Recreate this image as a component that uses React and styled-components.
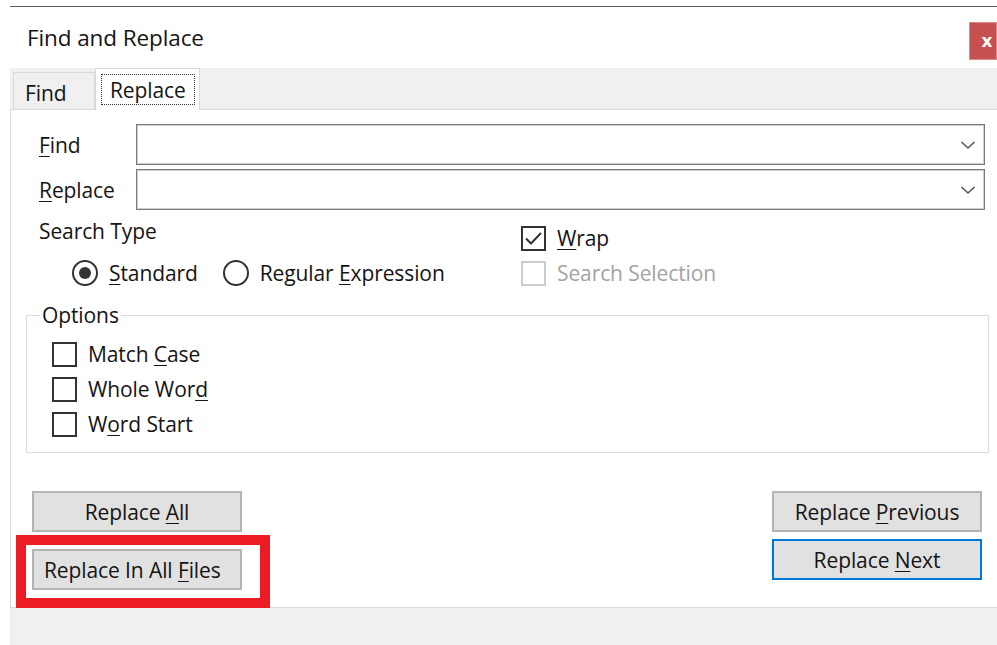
import React from 'react'
import styled, { createGlobalStyle } from 'styled-components'

const GlobalStyle = createGlobalStyle`
    html, body {
        margin: 0;
        padding: 0;
        background: #fff;
        overflow: hidden;
    }
    body {
        font-family: "Open Sans", "Noto Sans", "Liberation Sans", sans-serif;
        color: #141414;
    }
`

const Window = styled.div`
    width: 995px;
    margin: 6px 0 0 10px;
    border-top: 1px solid #5c5c5c;
    display: flex;
    flex-direction: column;
    font-size: 21px;
    letter-spacing: -0.1px;
`

const TitleBar = styled.div`
    height: 61px;
    display: flex;
    align-items: flex-start;
    justify-content: space-between;
    background: #fff;
`

const Title = styled.div`
    padding: 16px 0 0 17px;
    line-height: 30px;
    font-size: 22.5px;
`

const CloseButton = styled.div`
    margin: 15px 8px 0 0;
    width: 28px;
    height: 38px;
    background: #c75050;
    border: 1px solid #d98a8a;
    box-sizing: border-box;
    color: #fff;
    font-family: "DejaVu Sans", sans-serif;
    font-weight: bold;
    font-size: 17px;
    display: flex;
    align-items: center;
    justify-content: center;
    padding-left: 8px;
`

const TabStrip = styled.div`
    height: 41px;
    background: #f0f0f0;
    border-bottom: 1px solid #d9d9d9;
    display: flex;
    align-items: flex-end;
    padding-left: 3px;
`

const Tab = styled.div`
    box-sizing: border-box;
    height: ${p => (p.$active ? '42px' : '37px')};
    margin-bottom: ${p => (p.$active ? '-1px' : '0')};
    padding: ${p => (p.$active ? '5px 4px 0 5px' : '5px 0 0 11px')};
    width: ${p => (p.$active ? '105px' : '82px')};
    background: ${p => (p.$active ? '#fff' : '#f0f0f0')};
    border: 1px solid #d9d9d9;
    border-bottom: none;
    line-height: 30px;
`

const FocusRing = styled.div`
    border: 1px dotted #333;
    height: 31px;
    box-sizing: border-box;
    display: flex;
    align-items: center;
    padding-left: 8px;
    line-height: 26px;
`

const Panel = styled.div`
    background: #fff;
    border-left: 1px solid #dadada;
    padding: 14px 16px 17px 15px;
    display: flex;
    flex-direction: column;
`

const FieldRow = styled.div`
    display: grid;
    grid-template-columns: 97px 1fr;
    align-items: center;
    margin: 0 4px 0 13px;
    & + & {
        margin-top: 4px;
    }
`

const Label = styled.label`
    line-height: 28px;
`

const Combo = styled.div`
    height: 41px;
    box-sizing: border-box;
    border: 1px solid #7a7a7a;
    box-shadow: inset 0 0 0 1px #cfcfcf;
    display: flex;
    align-items: center;
    justify-content: flex-end;
    padding-right: 8px;
`

const Key = styled.span`
    text-decoration: underline;
    text-underline-offset: 3px;
    text-decoration-thickness: 1px;
`

const SearchArea = styled.div`
    display: flex;
    padding-left: 13px;
`

const SearchTypeColumn = styled.div`
    width: 482px;
    display: flex;
    flex-direction: column;
`

const SectionLabel = styled.div`
    margin-top: 8px;
    line-height: 26px;
`

const RadioRow = styled.div`
    display: flex;
    align-items: center;
    gap: 25px;
    margin: 16px 0 0 33px;
`

const Choice = styled.div`
    display: flex;
    align-items: center;
    gap: 11px;
    height: 26px;
    line-height: 26px;
    color: ${p => (p.$disabled ? '#a3a3a3' : 'inherit')};
`

const RadioDot = styled.span`
    width: 26px;
    height: 26px;
    box-sizing: border-box;
    border-radius: 50%;
    border: 2px solid #333;
    display: flex;
    align-items: center;
    justify-content: center;
    &::after {
        content: '';
        width: 12px;
        height: 12px;
        border-radius: 50%;
        background: ${p => (p.$checked ? '#333' : 'transparent')};
    }
`

const Box = styled.span`
    width: 25px;
    height: 25px;
    box-sizing: border-box;
    border: 2px solid ${p => (p.$disabled ? '#cccccc' : '#333')};
    display: flex;
    align-items: center;
    justify-content: center;
    flex-shrink: 0;
`

const FlagsColumn = styled.div`
    display: flex;
    flex-direction: column;
    gap: 9px;
    margin-top: 15px;
`

const OptionsGroup = styled.fieldset`
    margin: 17px 0 0;
    padding: 14px 0 15px 25px;
    border: 1px solid #dcdcdc;
    display: flex;
    flex-direction: column;
    gap: 9px;
    min-width: 0;
    legend {
        margin-left: -12px;
        padding: 0 2px;
        line-height: 24px;
    }
`

const ButtonArea = styled.div`
    display: flex;
    justify-content: space-between;
    margin: 38px 7px 0 6px;
`

const ButtonColumn = styled.div`
    display: flex;
    flex-direction: column;
    gap: ${p => p.$gap}px;
`

const Button = styled.button`
    width: 210px;
    height: 41px;
    box-sizing: border-box;
    background: #e1e1e1;
    border: ${p => (p.$default ? '2px solid #0078d7' : '2px solid #b4b4b4')};
    font: inherit;
    color: inherit;
    letter-spacing: inherit;
    padding: ${p => (p.$left ? '0 0 0 10px' : '0')};
    text-align: ${p => (p.$left ? 'left' : 'center')};
    line-height: 28px;
    white-space: nowrap;
`

const Highlighted = styled.div`
    position: relative;
`

const RedMark = styled.div`
    position: absolute;
    left: -16px;
    top: -14px;
    width: 254px;
    height: 73px;
    box-sizing: border-box;
    border: 10px solid #ec1c24;
    pointer-events: none;
    z-index: 2;
`

const StatusBar = styled.div`
    height: 38px;
    background: #f0f0f0;
    border-top: 1px solid #dadada;
`

const Chevron = () => (
    <svg width="16" height="10" viewBox="0 0 16 10">
        <path d="M1.5 2 L8 8 L14.5 2" fill="none" stroke="#555" strokeWidth="1.6" />
    </svg>
)

const Tick = () => (
    <svg width="19" height="15" viewBox="0 0 19 15">
        <path d="M2 7.5 L7 12.5 L17 2" fill="none" stroke="#333" strokeWidth="2" />
    </svg>
)

const Check = ({ checked, disabled, children }) => (
    <Choice $disabled={disabled}>
        <Box $disabled={disabled}>{checked && <Tick />}</Box>
        <span>{children}</span>
    </Choice>
)

const Radio = ({ checked, children }) => (
    <Choice>
        <RadioDot $checked={checked} />
        <span>{children}</span>
    </Choice>
)

export default function App() {
    return (
        <>
            <GlobalStyle />
            <Window>
                <TitleBar>
                    <Title>Find and Replace</Title>
                    <CloseButton>x</CloseButton>
                </TitleBar>
                <TabStrip>
                    <Tab>Find</Tab>
                    <Tab $active>
                        <FocusRing>Replace</FocusRing>
                    </Tab>
                </TabStrip>
                <Panel>
                    <FieldRow>
                        <Label><Key>F</Key>ind</Label>
                        <Combo><Chevron /></Combo>
                    </FieldRow>
                    <FieldRow>
                        <Label><Key>R</Key>eplace</Label>
                        <Combo><Chevron /></Combo>
                    </FieldRow>

                    <SearchArea>
                        <SearchTypeColumn>
                            <SectionLabel>Search Type</SectionLabel>
                            <RadioRow>
                                <Radio checked><Key>S</Key>tandard</Radio>
                                <Radio>Regular <Key>E</Key>xpression</Radio>
                            </RadioRow>
                        </SearchTypeColumn>
                        <FlagsColumn>
                            <Check checked><Key>W</Key>rap</Check>
                            <Check disabled>Search Selection</Check>
                        </FlagsColumn>
                    </SearchArea>

                    <OptionsGroup>
                        <legend>Options</legend>
                        <Check>Match <Key>C</Key>ase</Check>
                        <Check>Whole Wor<Key>d</Key></Check>
                        <Check>W<Key>o</Key>rd Start</Check>
                    </OptionsGroup>

                    <ButtonArea>
                        <ButtonColumn $gap={17}>
                            <Button>Replace <Key>A</Key>ll</Button>
                            <Highlighted>
                                <Button $left>Replace In All <Key>F</Key>iles</Button>
                                <RedMark />
                            </Highlighted>
                        </ButtonColumn>
                        <ButtonColumn $gap={7}>
                            <Button>Replace <Key>P</Key>revious</Button>
                            <Button $default>Replace <Key>N</Key>ext</Button>
                        </ButtonColumn>
                    </ButtonArea>
                </Panel>
                <StatusBar />
            </Window>
        </>
    )
}
